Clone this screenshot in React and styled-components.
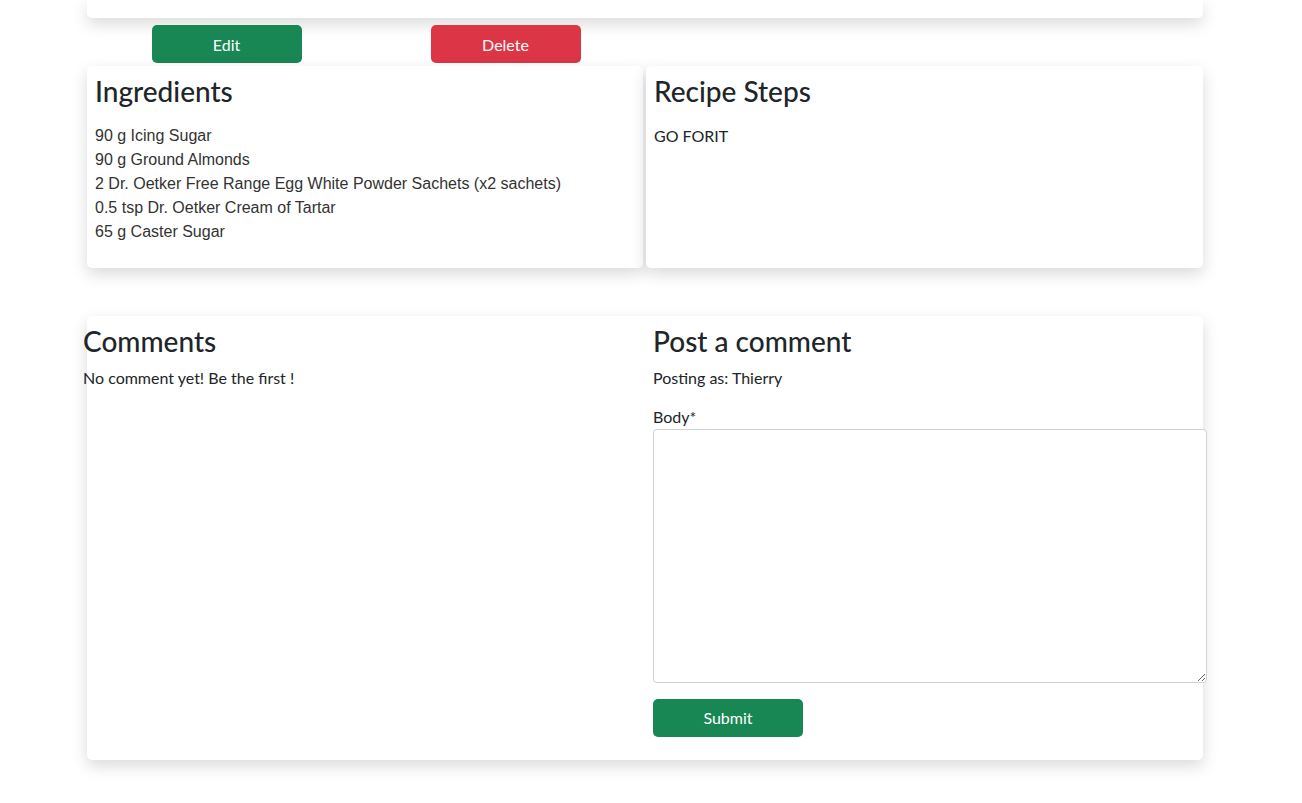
import styled, {createGlobalStyle} from "styled-components";

const GlobalStyle = createGlobalStyle`
  body {
    margin: 0;
    background: #fff;
    font-family: Lato, "Noto Sans", sans-serif;
    font-size: 16px;
    line-height: 1.5;
    color: #212529;
  }
  * { box-sizing: border-box; }
`

const Container = styled.div`
  width: 1116px;
  margin-left: 87px;
  padding-bottom: 40px;
`

const Card = styled.div`
  background: #fff;
  border-radius: 5px;
  box-shadow: rgba(0, 0, 0, 0.15) 0px 6px 16px;
`

const TopCard = styled(Card)`
  height: 18px;
  border-radius: 0 0 5px 5px;
`

const ActionRow = styled.div`
  display: grid;
  grid-template-columns: repeat(4, 1fr);
  margin-top: 7px;
  justify-items: center;
`

const Button = styled.button`
  width: 150px;
  height: 38px;
  border: none;
  border-radius: 5px;
  color: #fff;
  font-family: inherit;
  font-size: 16px;
  cursor: pointer;
  background: ${p => p.$variant === "danger" ? "#dc3545" : "#198754"};
`

const DetailRow = styled.div`
  display: grid;
  grid-template-columns: 556px 1fr;
  gap: 3px;
  margin-top: 3px;
`

const DetailCard = styled(Card)`
  padding: 9px 8px 0;
  min-height: 202px;
`

const Heading = styled.h3`
  margin: 0 0 ${p => p.$tight ? 7 : 8}px;
  font-size: 28px;
  font-weight: 500;
  line-height: 1.2;
`

const IngredientList = styled.ul`
  list-style: none;
  margin: 15px 0 16px;
  padding: 0;
  font-family: "Liberation Sans", Arial, sans-serif;
  color: #333;
  line-height: 24px;
`

const StepText = styled.p`
  margin: 15px 0 16px;
`

const CommentCard = styled(Card)`
  margin-top: 48px;
  padding: 9px 0 23px;
`

const CommentRow = styled.div`
  display: grid;
  grid-template-columns: 1fr 1fr;
  margin: 0 -12px;
`

const Column = styled.div`
  padding: 0 8px;
`

const Text = styled.p`
  margin: 0 0 15px;
`

const Label = styled.label`
  display: block;
`

const TextArea = styled.textarea`
  display: block;
  width: 100%;
  height: 254px;
  border: 1px solid #ced4da;
  border-radius: 4px;
  font-family: inherit;
  font-size: 16px;
  padding: 6px 12px;
`

const SubmitButton = styled(Button)`
  margin-top: 16px;
`

const ingredients = [
    "90 g Icing Sugar",
    "90 g Ground Almonds",
    "2 Dr. Oetker Free Range Egg White Powder Sachets (x2 sachets)",
    "0.5 tsp Dr. Oetker Cream of Tartar",
    "65 g Caster Sugar",
]

export default function App() {
    return (
        <>
            <GlobalStyle/>
            <Container>
                <TopCard/>
                <ActionRow>
                    <Button>Edit</Button>
                    <Button $variant="danger">Delete</Button>
                </ActionRow>
                <DetailRow>
                    <DetailCard>
                        <Heading>Ingredients</Heading>
                        <IngredientList>
                            {ingredients.map(item => <li key={item}>{item}</li>)}
                        </IngredientList>
                    </DetailCard>
                    <DetailCard>
                        <Heading>Recipe Steps</Heading>
                        <StepText>GO FORIT</StepText>
                    </DetailCard>
                </DetailRow>
                <CommentCard>
                    <CommentRow>
                        <Column>
                            <Heading $tight>Comments</Heading>
                            <Text>No comment yet! Be the first !</Text>
                        </Column>
                        <Column>
                            <Heading $tight>Post a comment</Heading>
                            <Text>Posting as: Thierry</Text>
                            <Label htmlFor="body">Body*</Label>
                            <TextArea id="body"/>
                            <SubmitButton>Submit</SubmitButton>
                        </Column>
                    </CommentRow>
                </CommentCard>
            </Container>
        </>
    )
}
